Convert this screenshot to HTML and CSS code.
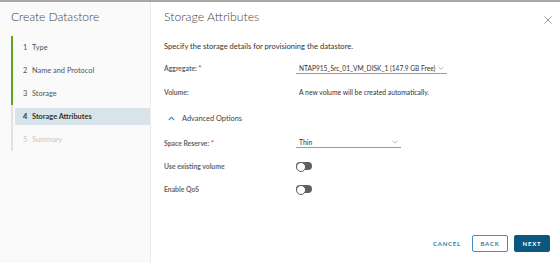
FILE: index.html
```html
<!DOCTYPE html>
<html>
<head>
<meta charset="utf-8">
<link rel="stylesheet" href="styles.css">
</head>
<body>
<div class="modal">
  <aside class="sidebar">
    <h1 class="side-title">Create Datastore</h1>
    <ol class="steps">
      <li class="step done"><span class="num">1</span>Type</li>
      <li class="step done"><span class="num">2</span>Name and Protocol</li>
      <li class="step done"><span class="num">3</span>Storage</li>
      <li class="step current"><span class="num">4</span>Storage Attributes</li>
      <li class="step todo"><span class="num">5</span>Summary</li>
    </ol>
  </aside>
  <main class="content">
    <header class="head">
      <h2 class="title">Storage Attributes</h2>
      <svg class="close" width="8" height="8" viewBox="0 0 8 8"><path d="M0.5 0.5L7.5 7.5M7.5 0.5L0.5 7.5" stroke="#8a8a8a" stroke-width="0.9" fill="none"/></svg>
    </header>
    <p class="intro">Specify the storage details for provisioning the datastore.</p>
    <div class="form">
      <div class="row">
        <span class="label">Aggregate: <span class="req">*</span></span>
        <span class="select wide"><span class="sel-text">NTAP915_Src_01_VM_DISK_1 (147.9 GB Free)</span><svg class="chev" width="6" height="4" viewBox="0 0 6 4"><path d="M0.5 0.8L3 3.2L5.5 0.8" stroke="#999" stroke-width="0.7" fill="none"/></svg></span>
      </div>
      <div class="row">
        <span class="label">Volume:</span>
        <span class="value">A new volume will be created automatically.</span>
      </div>
      <div class="adv">
        <svg class="up" width="7" height="5" viewBox="0 0 7 5"><path d="M0.8 4L3.5 1.3L6.2 4" stroke="#3c8fc4" stroke-width="1.1" fill="none"/></svg>
        <span>Advanced Options</span>
      </div>
      <div class="row short">
        <span class="label">Space Reserve: <span class="req">*</span></span>
        <span class="select narrow"><span class="sel-text">Thin</span><svg class="chev" width="6" height="4" viewBox="0 0 6 4"><path d="M0.5 0.8L3 3.2L5.5 0.8" stroke="#999" stroke-width="0.7" fill="none"/></svg></span>
      </div>
      <div class="row short">
        <span class="label">Use existing volume</span>
        <span class="toggle"></span>
      </div>
      <div class="row short">
        <span class="label">Enable QoS</span>
        <span class="toggle"></span>
      </div>
    </div>
    <footer class="actions">
      <button class="btn link">CANCEL</button>
      <button class="btn outline">BACK</button>
      <button class="btn solid">NEXT</button>
    </footer>
  </main>
</div>
</body>
</html>
```
FILE: styles.css
```css
* { box-sizing: border-box; }
html, body { margin: 0; padding: 0; }
body {
  width: 560px;
  height: 265px;
  font-family: "Lato", "Open Sans", sans-serif;
  color: #333;
  background: #fff;
  overflow: hidden;
}
.modal {
  display: flex;
  height: 263px;
  border-top: 2px solid #a8a8a8;
}
.sidebar {
  width: 151px;
  flex: none;
  background: #fafafa;
  border-right: 1px solid #ececec;
  padding-top: 8px;
}
.side-title {
  margin: 0 0 0 11px;
  font-size: 12px;
  font-weight: 300;
  color: #444;
  line-height: 14px;
}
.steps {
  list-style: none;
  margin: 12px 0 0 11px;
  padding: 0;
}
.step {
  height: 23px;
  display: flex;
  align-items: center;
  font-size: 7.4px;
  color: #555;
  border-left: 2px solid #62a420;
  padding-left: 10px;
}
.step .num { width: 9px; }
.step.current {
  border-left: none;
  background: #d9e4ea;
  margin-left: 4px;
  padding-left: 8px;
  height: 17px;
  margin-top: 3px;
  margin-bottom: 3px;
  font-weight: 700;
  color: #333;
  position: relative;
}
.step.current::before {
  content: "";
  position: absolute;
  left: -4px;
  top: -3px;
  bottom: -3px;
  width: 2px;
  background: #e2e2e2;
}
.step.todo { border-left-color: #e2e2e2; color: #c6c6c6; }
.content {
  flex: 1;
  display: flex;
  flex-direction: column;
  padding: 6px 8px 0 13px;
}
.head {
  display: flex;
  justify-content: space-between;
  align-items: center;
  height: 16px;
}
.title {
  margin: 0;
  font-size: 12.3px;
  font-weight: 300;
  color: #444;
}
.close { margin-top: 7px; }
.intro {
  margin: 17px 0 0 0;
  font-size: 7.6px;
  color: #333;
  line-height: 10px;
}
.form { margin-top: 5px; }
.row {
  display: flex;
  align-items: center;
  height: 24px;
  font-size: 6.8px;
  color: #444;
}
.row.short { height: 23px; }
.label { width: 132px; flex: none; font-weight: 700; color: #666; }
.req { color: #d0342c; }
.select {
  display: flex;
  justify-content: space-between;
  align-items: center;
  border-bottom: 1px solid #9a9a9a;
  height: 11px;
  padding: 0 3px 0 3px;
  color: #333;
  white-space: nowrap;
}
.sel-text { font-size: 6.6px; }
.select.narrow .sel-text { font-size: 6.8px; }
.select.wide { width: 151px; }
.select.narrow { width: 105px; }
.chev { margin-left: 2px; }
.value { padding-left: 3px; font-size: 6.8px; color: #333; font-weight: 400; }
.adv {
  display: flex;
  align-items: center;
  height: 27px;
  padding-top: 1px;
  font-size: 7.4px;
  color: #444;
}
.adv .up { margin-left: 4px; margin-right: 7px; }
.toggle {
  width: 16px;
  height: 8px;
  border-radius: 4px;
  background: #5f5f5f;
  position: relative;
}
.toggle::after {
  content: "";
  position: absolute;
  left: 0;
  top: 0;
  width: 8px;
  height: 8px;
  border-radius: 50%;
  background: #fff;
  border: 1px solid #5f5f5f;
}
.actions {
  margin-top: auto;
  margin-bottom: 11px;
  margin-right: 2px;
  display: flex;
  justify-content: flex-end;
  align-items: center;
  gap: 6px;
}
.btn {
  font-family: "Lato", sans-serif;
  font-size: 6px;
  font-weight: 700;
  letter-spacing: 0.8px;
  height: 17px;
  padding: 0;
  border-radius: 2px;
  cursor: pointer;
}
.btn.link { background: none; border: none; color: #3478a8; width: 34px; margin-right: 2px; }
.btn.outline { background: #fff; border: 1px solid #3f8fc4; color: #3478a8; width: 36px; }
.btn.solid { background: #0c577f; border: 1px solid #0c577f; color: #fff; width: 36px; }
```
